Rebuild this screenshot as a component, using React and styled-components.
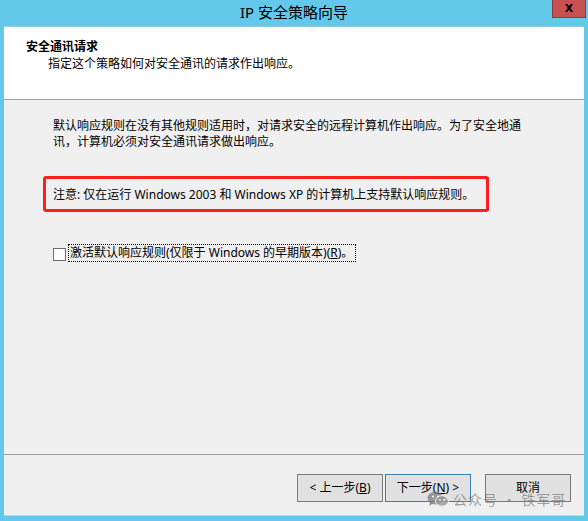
import React from "react";
import styled, { createGlobalStyle } from "styled-components";

const Global = createGlobalStyle`
  html, body { margin: 0; padding: 0; background: #63c8ea; }
  body { font-family: "Noto Sans", "Noto Sans CJK SC", sans-serif; color: #000; }
`;

const Window = styled.div`
  position: relative;
  box-sizing: border-box;
  width: 588px;
  height: 521px;
  background: #63c8ea;
  padding: 0 4px 5px;
  display: flex;
  flex-direction: column;
`;

const TitleBar = styled.div`
  height: 26px;
  border-bottom: 1px solid #8fcfe4;
  display: grid;
  grid-template-columns: 1fr auto 1fr;
  align-items: start;
`;

const Title = styled.div`
  grid-column: 2;
  font-size: 15px;
  line-height: 24px;
  color: #000;
  white-space: nowrap;
`;

const CloseButton = styled.div`
  grid-column: 3;
  justify-self: end;
  margin-right: -2px;
  box-sizing: border-box;
  width: 34px;
  height: 18px;
  background: #c75050;
  border: 1px solid #8a3a3a;
  border-top: none;
  display: flex;
  align-items: center;
  justify-content: center;
  font-family: "DejaVu Sans", sans-serif;
  font-weight: bold;
  font-size: 11px;
  color: #000;
`;

const Client = styled.div`
  flex: 1;
  display: flex;
  flex-direction: column;
  background: #f0f0f0;
  font-size: 12px;
`;

const Header = styled.div`
  box-sizing: border-box;
  height: 73px;
  background: #fff;
  border-bottom: 1px solid #a0a0a0;
  padding: 11px 0 0 22px;
`;

const HeaderTitle = styled.div`
  font-weight: bold;
  line-height: 17px;
`;

const HeaderSub = styled.div`
  padding-left: 22px;
  line-height: 17px;
`;

const Body = styled.div`
  padding: 18px 0 0 39px;
  display: flex;
  flex-direction: column;
  align-items: flex-start;
`;

const Paragraph = styled.p`
  margin: 0 0 0 10px;
  width: 472px;
  line-height: 16px;
`;

const NoteBox = styled.div`
  box-sizing: border-box;
  margin-top: 26px;
  width: 446px;
  height: 36px;
  border: 3px solid #ff1e1e;
  border-radius: 3px;
  display: flex;
  align-items: center;
  padding-left: 7px;
  white-space: nowrap;
`;

const CheckRow = styled.div`
  margin: 32px 0 0 10px;
  display: flex;
  align-items: center;
  gap: 2px;
  height: 18px;
`;

const CheckBox = styled.span`
  box-sizing: border-box;
  width: 13px;
  height: 13px;
  margin-top: 2px;
  background: #fff;
  border: 1px solid #6d6d6d;
`;

const CheckLabel = styled.span`
  border: 1px dotted #000;
  padding: 0 2px 0 1px;
  line-height: 16px;
  white-space: nowrap;
`;

const Footer = styled.div`
  margin-top: auto;
  box-sizing: border-box;
  height: 62px;
  border-top: 1px solid #a0a0a0;
  border-bottom: 1px solid #d0d0d0;
  display: flex;
  justify-content: flex-end;
  align-items: flex-start;
  padding: 19px 13px 0 0;
`;

const Button = styled.div`
  box-sizing: border-box;
  width: 86px;
  height: 28px;
  margin-left: ${(p) => p.$gap || 0}px;
  background: #e1e1e1;
  border: 1px solid ${(p) => (p.$primary ? "#3c7fb1" : "#7a7a7a")};
  display: flex;
  align-items: center;
  justify-content: center;
  line-height: 16px;
  white-space: nowrap;
`;

const U = styled.span`
  text-decoration: underline;
`;

const Watermark = styled.div`
  position: absolute;
  left: 427px;
  top: 489px;
  display: flex;
  align-items: center;
  gap: 4px;
  color: rgba(120, 120, 120, 0.7);
  font-family: "Noto Sans CJK SC", sans-serif;
  font-size: 14px;
  letter-spacing: 1px;
  pointer-events: none;
  white-space: nowrap;
`;

const WeChatIcon = () => (
  <svg width="22" height="16" viewBox="0 0 22 16">
    <ellipse cx="8.5" cy="7" rx="8" ry="6.5" fill="rgba(120,120,120,0.7)" />
    <path d="M3 11 L2 15 L7 12 Z" fill="rgba(120,120,120,0.7)" />
    <ellipse cx="15" cy="10" rx="6.5" ry="5.3" fill="rgba(150,150,150,0.75)" stroke="#f0f0f0" strokeWidth="1" />
    <circle cx="6" cy="5.5" r="1.1" fill="#f0f0f0" />
    <circle cx="11" cy="5.5" r="1.1" fill="#f0f0f0" />
    <circle cx="13" cy="9" r="0.9" fill="#f0f0f0" />
    <circle cx="17" cy="9" r="0.9" fill="#f0f0f0" />
  </svg>
);

export default function App() {
  return (
    <>
      <Global />
      <Window>
        <TitleBar>
          <Title>IP 安全策略向导</Title>
          <CloseButton>X</CloseButton>
        </TitleBar>
        <Client>
          <Header>
            <HeaderTitle>安全通讯请求</HeaderTitle>
            <HeaderSub>指定这个策略如何对安全通讯的请求作出响应。</HeaderSub>
          </Header>
          <Body>
            <Paragraph>
              默认响应规则在没有其他规则适用时，对请求安全的远程计算机作出响应。为了安全地通讯，计算机必须对安全通讯请求做出响应。
            </Paragraph>
            <NoteBox>注意: 仅在运行 Windows 2003 和 Windows XP 的计算机上支持默认响应规则。</NoteBox>
            <CheckRow>
              <CheckBox />
              <CheckLabel>
                激活默认响应规则(仅限于 Windows 的早期版本)(<U>R</U>)。
              </CheckLabel>
            </CheckRow>
          </Body>
          <Footer>
            <Button>
              &lt; 上一步(<U>B</U>)
            </Button>
            <Button $primary $gap={2}>
              下一步(<U>N</U>) &gt;
            </Button>
            <Button $gap={14}>取消</Button>
          </Footer>
        </Client>
        <Watermark>
          <WeChatIcon />
          <span>公众号 · 铁军哥</span>
        </Watermark>
      </Window>
    </>
  );
}
